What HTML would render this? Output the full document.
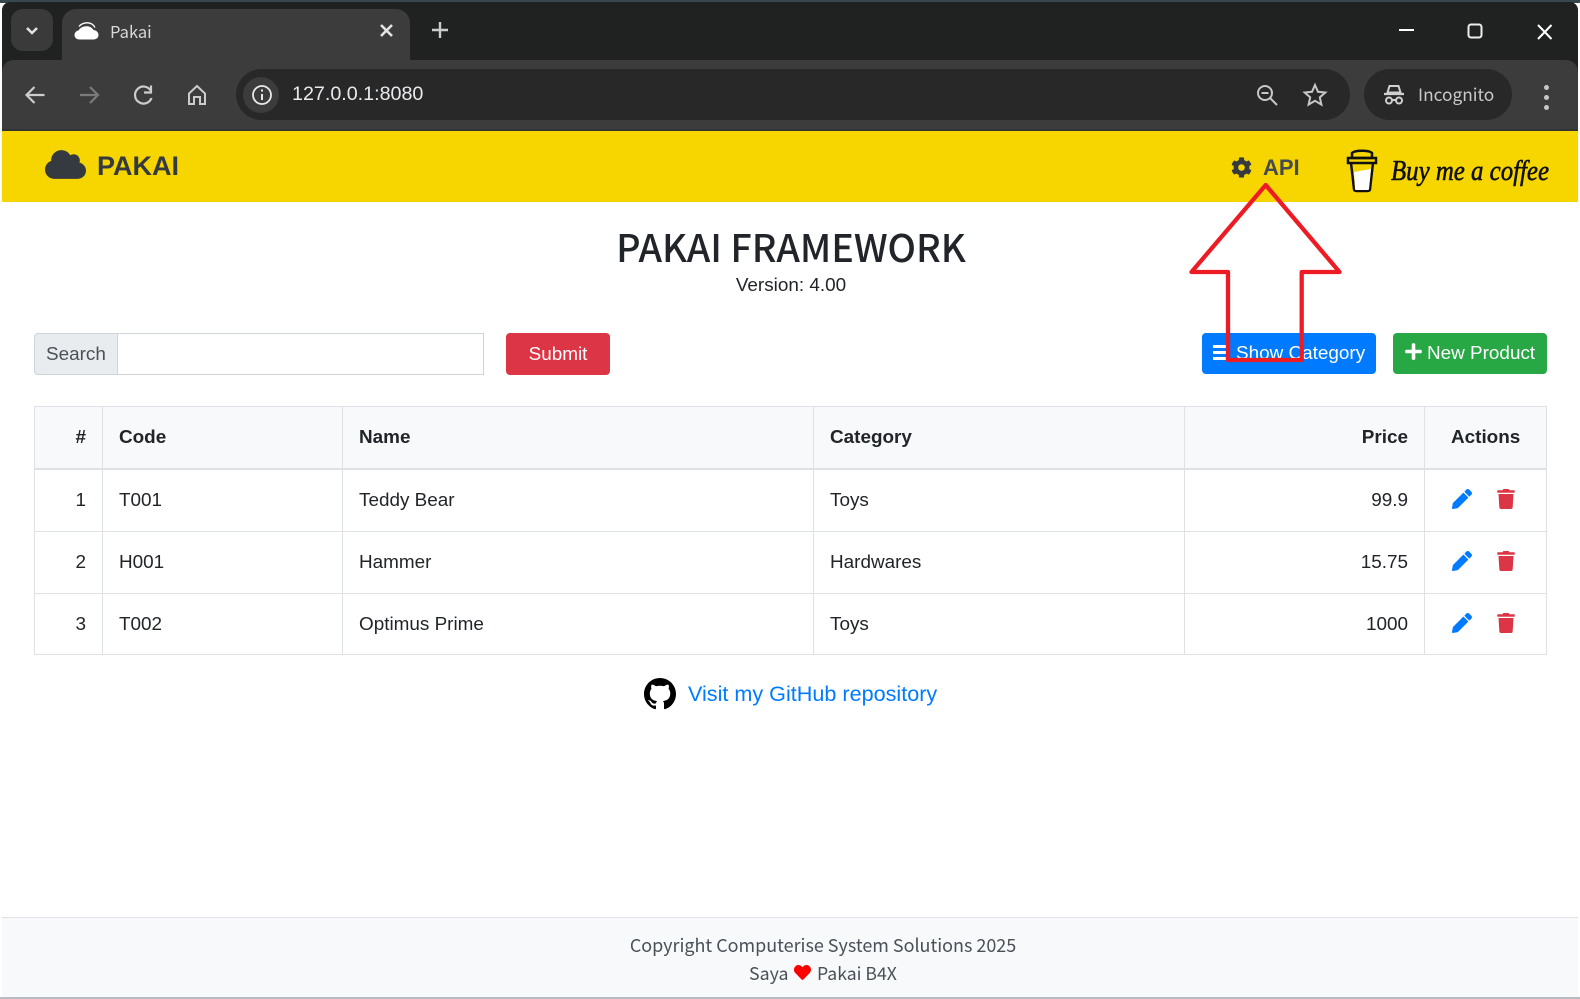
<!DOCTYPE html>
<html><head><meta charset="utf-8"><title>Pakai</title>
<style>
html,body{margin:0;padding:0;background:#fff}
body{position:relative;width:1580px;height:999px;overflow:hidden;font-family:"Liberation Sans",sans-serif;color:#212529}
.a{position:absolute}
.t{position:absolute;white-space:nowrap;line-height:1}
.n{font-family:"Noto Sans CJK SC","Liberation Sans",sans-serif}
.c{font-size:18.9px;color:#212529}
.b{font-weight:bold}
.r{text-align:right}
svg{position:absolute;overflow:visible}
.line{position:absolute;background:#dee2e6}
</style></head><body>
<!-- browser chrome -->
<div class="a" style="left:0;top:0;width:1580px;height:3px;background:#37474f"></div>
<div class="a" style="left:2px;top:2px;width:1576px;height:90px;background:#202221;border-radius:8px 8px 0 0"></div>
<div class="a" style="left:11px;top:9px;width:42px;height:42px;background:#3a3a3a;border-radius:12px"></div>
<svg style="left:0;top:0" width="1580" height="131" fill="none" stroke="#e3e3e3" stroke-width="2"><path d="M27 28l5 5 5-5" stroke-width="2.5"/></svg>
<div class="a" style="left:62px;top:9px;width:348px;height:60px;background:#3c3c3c;border-radius:14px 14px 0 0"></div>
<div class="a" style="left:2px;top:60px;width:1576px;height:69px;background:#3c3c3c;border-radius:12px 12px 0 0"></div>
<div class="a" style="left:2px;top:129px;width:1576px;height:2px;background:#333"></div>
<svg style="left:74px;top:22px" width="25" height="18" viewBox="0 0 25 18"><path fill="#fff" d="M5.500 17.500C2.500 17.500.5 15.500.5 13c0-2.400 1.800-4.200 4-4.500C6 5.800 9 4.200 12.500 4.200c3 0 5.600 1.300 7 3.800 2.800.3 5 2.300 5 5 0 2.600-2.200 4.500-5 4.500z"/><path fill="none" stroke="#fff" stroke-width="1.300" d="M5 4.500C7.500 1.500 10.500.7 13.500.8c3.500.1 6 1.700 7.500 4.700"/></svg>
<div class="t n" style="left:110px;top:23px;font-size:16.5px;color:#d8d8d8">Pakai</div>
<svg style="left:0;top:0" width="1580" height="131" fill="none" stroke="#e3e3e3" stroke-width="2">
<path d="M381 25l11 11M392 25l-11 11" stroke-width="2.6"/>
<path d="M440 22v16M432 30h16" stroke-width="2.4" stroke="#ccc"/>
<path d="M1399 30h15" stroke="#fff" stroke-width="2"/>
<rect x="1468.500" y="24.500" width="13" height="13" rx="2.500" stroke="#eee"/>
<path d="M1538 25l13.500 14M1551.500 25l-13.500 14" stroke="#fff" stroke-width="2"/>
<path d="M44.500 95H27.500M34.500 87l-8 8 8 8" stroke="#ccc" stroke-width="2.200"/>
<path d="M80 95h17M90 87l8 8-8 8" stroke="#7a7a7a" stroke-width="2.200"/>
<path d="M151 91a8.500 8.500 0 1 0 .5 7" stroke="#ccc" stroke-width="2.200"/><path d="M151 85.500v7h-7" stroke="#ccc" stroke-width="2.200"/>
<path d="M189 104V93.500l8-7.500 8 7.500V104h-5v-7h-6v7z" stroke="#ccc" stroke-width="2"/>
</svg>
<div class="a" style="left:236px;top:69px;width:1114px;height:51px;background:#282828;border-radius:26px"></div>
<div class="a" style="left:243px;top:77px;width:36px;height:36px;background:#3c3c3c;border-radius:50%"></div>
<svg style="left:0;top:0" width="1580" height="131" fill="none" stroke="#e8e8e8" stroke-width="1.800">
<circle cx="262" cy="95" r="9"/><path d="M262 94v6" stroke-width="2"/><path d="M262 89.500v2" stroke-width="2"/>
<circle cx="1265" cy="93" r="7" stroke="#c7c7c7" stroke-width="2"/><path d="M1261.500 93h7M1270 98l7 7" stroke="#c7c7c7" stroke-width="2"/>
<path d="M1315 85l3 6.800 7.300.7-5.500 4.900 1.600 7.200-6.400-3.800-6.400 3.800 1.600-7.200-5.500-4.900 7.300-.7z" stroke="#c7c7c7" stroke-width="2"/>
</svg>
<div class="t" style="left:292px;top:85px;font-size:19.7px;color:#e8eaed">127.0.0.1:8080</div>
<div class="a" style="left:1364px;top:69px;width:148px;height:51px;background:#282828;border-radius:26px"></div>
<svg style="left:1383px;top:84px" width="22" height="22" fill="none" stroke="#d0d0d0" stroke-width="2"><path d="M4.500 8.500L6.500 2h9l2 6.500z" fill="#282828"/><path d="M1 10h20" stroke-width="2.200"/><circle cx="6" cy="16.500" r="3"/><circle cx="16" cy="16.500" r="3"/><path d="M9 16h4"/></svg>
<div class="t n" style="left:1418px;top:85px;font-size:17.3px;color:#c9c9c9">Incognito</div>
<div class="a" style="left:1544px;top:84.500px;width:5px;height:5px;border-radius:50%;background:#c7c7c7;box-shadow:0 10px 0 #c7c7c7,0 20px 0 #c7c7c7"></div>

<!-- navbar -->
<div class="a" style="left:2px;top:131px;width:1576px;height:71px;background:#f7d600"></div>
<svg style="left:45px;top:148px" width="41" height="33" viewBox="0 0 640 512"><path fill="#343a40" d="M537.6 226.6c4.1-10.7 6.4-22.4 6.4-34.6 0-53-43-96-96-96-19.7 0-38.1 6-53.3 16.2C367 64.200 315.3 32 256 32c-88.400 0-160 71.600-160 160 0 2.700.1 5.400.2 8.100C40.200 219.800 0 273.200 0 336c0 79.500 64.500 144 144 144h368c70.700 0 128-57.300 128-128 0-61.900-44-113.600-102.400-125.400z"/></svg>
<div class="t b" style="left:97px;top:153px;font-size:27px;color:#343a40">PAKAI</div>
<svg style="left:1231px;top:157px" width="21" height="21" viewBox="0 0 512 512"><path fill="#343a40" d="M487.4 315.7l-42.6-24.6c4.3-23.2 4.3-47 0-70.2l42.6-24.6c4.9-2.8 7.1-8.6 5.5-14-11.1-35.6-30-67.8-54.7-94.6-3.8-4.1-10-5.1-14.8-2.3L380.8 110c-17.9-15.4-38.5-27.3-60.8-35.1V25.8c0-5.6-3.9-10.5-9.4-11.7-36.7-8.2-74.3-7.8-109.2 0-5.5 1.2-9.4 6.1-9.4 11.7V75c-22.2 7.9-42.8 19.8-60.8 35.1L88.7 85.5c-4.9-2.8-11-1.9-14.8 2.3-24.7 26.7-43.6 58.9-54.7 94.6-1.7 5.4.6 11.2 5.5 14L67.3 221c-4.3 23.2-4.3 47 0 70.2l-42.6 24.6c-4.9 2.8-7.1 8.6-5.5 14 11.1 35.6 30 67.8 54.7 94.6 3.8 4.1 10 5.1 14.8 2.3l42.6-24.6c17.9 15.4 38.5 27.3 60.8 35.1v49.2c0 5.6 3.9 10.5 9.4 11.7 36.7 8.2 74.3 7.8 109.2 0 5.5-1.2 9.4-6.1 9.4-11.7v-49.2c22.2-7.9 42.8-19.8 60.8-35.1l42.6 24.6c4.9 2.8 11 1.9 14.8-2.3 24.7-26.7 43.6-58.9 54.7-94.6 1.5-5.5-.7-11.3-5.6-14.1zM256 336c-44.1 0-80-35.9-80-80s35.9-80 80-80 80 35.9 80 80-35.9 80-80 80z"/></svg>
<div class="t b" style="left:1263px;top:157px;font-size:22px;color:#454b52">API</div>
<svg style="left:1346px;top:147px" width="32" height="46" fill="none" stroke="#111" stroke-width="2.500"><path d="M6 6c3-3 17-3 20 0v5H6z"/><path d="M2 11h28v5H2z"/><path d="M5 16l3 26c0 2 2 2 3 2h10c1 0 3 0 3-2l3-26"/><path d="M8 25l17-3-2 20c0 1-1 1-2 1H11c-1 0-2 0-2-1z" fill="#fff" stroke="none"/></svg>
<svg style="left:1391px;top:155px" width="160" height="40"><text x="0" y="25" textLength="158" lengthAdjust="spacingAndGlyphs" font-family="Liberation Serif" font-style="italic" font-size="29" fill="#111" stroke="#111" stroke-width=".6">Buy me a coffee</text></svg>

<!-- heading -->
<div class="t n" style="left:0;width:1582px;text-align:center;top:227px;font-size:37.8px;font-weight:500;color:#212529">PAKAI FRAMEWORK</div>
<div class="t" style="left:0;width:1582px;text-align:center;top:277px;font-size:18.9px;color:#212529">Version: 4.00</div>

<!-- search -->
<div class="a" style="left:34px;top:333px;width:84px;height:42px;box-sizing:border-box;background:#e9ecef;border:1px solid #ced4da;border-radius:4px 0 0 4px"></div>
<div class="a" style="left:117px;top:333px;width:367px;height:42px;box-sizing:border-box;background:#fff;border:1px solid #ced4da"></div>
<div class="t" style="left:46px;top:346px;font-size:18.9px;color:#495057">Search</div>
<div class="a" style="left:506px;top:333px;width:104px;height:42px;background:#dc3545;border-radius:4px"></div>
<div class="t" style="left:506px;width:104px;text-align:center;top:346px;font-size:18.9px;color:#fff">Submit</div>
<div class="a" style="left:1202px;top:333px;width:174px;height:41px;background:#007bff;border-radius:4px"></div>
<svg style="left:1213px;top:344px" width="15" height="17" fill="#fff"><rect x="0" y="1" width="14" height="3"/><rect x="0" y="7" width="14" height="3"/><rect x="0" y="13" width="14" height="3"/></svg>
<div class="t" style="left:1236px;top:345px;font-size:18.9px;color:#fff">Show Category</div>
<div class="a" style="left:1393px;top:333px;width:154px;height:41px;background:#28a745;border-radius:4px"></div>
<svg style="left:1405px;top:342px" width="17" height="19" viewBox="0 0 448 512"><path fill="#fff" d="M416 208H272V64c0-17.67-14.33-32-32-32h-32c-17.67 0-32 14.33-32 32v144H32c-17.67 0-32 14.33-32 32v32c0 17.67 14.33 32 32 32h144v144c0 17.67 14.33 32 32 32h32c17.67 0 32-14.33 32-32V304h144c17.67 0 32-14.33 32-32v-32c0-17.67-14.33-32-32-32z"/></svg>
<div class="t" style="left:1427px;top:345px;font-size:18.9px;color:#fff">New Product</div>

<!-- table -->
<div class="a" style="left:34px;top:406px;width:1513px;height:63px;background:#f8f9fa"></div>
<div class="line" style="left:34px;top:406px;width:1513px;height:1px"></div>
<div class="line" style="left:34px;top:468px;width:1513px;height:2px"></div>
<div class="line" style="left:34px;top:531px;width:1513px;height:1px"></div>
<div class="line" style="left:34px;top:593px;width:1513px;height:1px"></div>
<div class="line" style="left:34px;top:654px;width:1513px;height:1px"></div>
<div class="line" style="left:34px;top:406px;width:1px;height:249px"></div>
<div class="line" style="left:102px;top:406px;width:1px;height:249px"></div>
<div class="line" style="left:342px;top:406px;width:1px;height:249px"></div>
<div class="line" style="left:813px;top:406px;width:1px;height:249px"></div>
<div class="line" style="left:1184px;top:406px;width:1px;height:249px"></div>
<div class="line" style="left:1424px;top:406px;width:1px;height:249px"></div>
<div class="line" style="left:1546px;top:406px;width:1px;height:249px"></div>

<div class="t c b r" style="left:34px;width:52px;top:429px">#</div>
<div class="t c b" style="left:119px;top:429px">Code</div>
<div class="t c b" style="left:359px;top:429px">Name</div>
<div class="t c b" style="left:830px;top:429px">Category</div>
<div class="t c b r" style="left:1184px;width:224px;top:429px">Price</div>
<div class="t c b" style="left:1451px;top:429px">Actions</div>

<div class="t c r" style="left:34px;width:52px;top:492px">1</div>
<div class="t c" style="left:119px;top:492px">T001</div>
<div class="t c" style="left:359px;top:492px">Teddy Bear</div>
<div class="t c" style="left:830px;top:492px">Toys</div>
<div class="t c r" style="left:1184px;width:224px;top:492px">99.9</div>

<div class="t c r" style="left:34px;width:52px;top:554px">2</div>
<div class="t c" style="left:119px;top:554px">H001</div>
<div class="t c" style="left:359px;top:554px">Hammer</div>
<div class="t c" style="left:830px;top:554px">Hardwares</div>
<div class="t c r" style="left:1184px;width:224px;top:554px">15.75</div>

<div class="t c r" style="left:34px;width:52px;top:616px">3</div>
<div class="t c" style="left:119px;top:616px">T002</div>
<div class="t c" style="left:359px;top:616px">Optimus Prime</div>
<div class="t c" style="left:830px;top:616px">Toys</div>
<div class="t c r" style="left:1184px;width:224px;top:616px">1000</div>

<svg width="0" height="0"><defs>
<path id="pen" fill="#007bff" d="M497.900 142.100l-46.100 46.100c-4.700 4.700-12.300 4.700-17 0l-111-111c-4.700-4.700-4.700-12.300 0-17l46.100-46.100c18.700-18.700 49.100-18.700 67.900 0l60.100 60.100c18.800 18.700 18.800 49.100 0 67.900zM284.200 99.800L21.600 362.400.4 483.900c-2.900 16.400 11.400 30.600 27.800 27.800l121.500-21.300 262.600-262.600c4.700-4.700 4.700-12.300 0-17l-111-111c-4.800-4.700-12.400-4.700-17.100 0z"/>
<path id="bin" fill="#dc3545" d="M432 32H312l-9.400-18.700A24 24 0 0 0 281.100 0H166.800a23.720 23.720 0 0 0-21.400 13.300L136 32H16A16 16 0 0 0 0 48v32a16 16 0 0 0 16 16h416a16 16 0 0 0 16-16V48a16 16 0 0 0-16-16zM53.200 467a48 48 0 0 0 47.900 45h245.800a48 48 0 0 0 47.900-45L416 128H32z"/>
</defs></svg>
<svg style="left:1452px;top:489px" width="20" height="20" viewBox="0 0 512 512"><use href="#pen"/></svg>
<svg style="left:1497px;top:489px" width="18" height="20" viewBox="0 0 448 512"><use href="#bin"/></svg>
<svg style="left:1452px;top:551px" width="20" height="20" viewBox="0 0 512 512"><use href="#pen"/></svg>
<svg style="left:1497px;top:551px" width="18" height="20" viewBox="0 0 448 512"><use href="#bin"/></svg>
<svg style="left:1452px;top:613px" width="20" height="20" viewBox="0 0 512 512"><use href="#pen"/></svg>
<svg style="left:1497px;top:613px" width="18" height="20" viewBox="0 0 448 512"><use href="#bin"/></svg>

<!-- github -->
<svg style="left:644px;top:678px" width="32" height="32" viewBox="0 0 16 16"><path fill="#000" d="M8 0C3.580 0 0 3.580 0 8c0 3.540 2.290 6.530 5.470 7.590.4.070.55-.17.55-.38 0-.19-.01-.82-.01-1.490-2.010.37-2.530-.49-2.690-.94-.09-.23-.48-.94-.82-1.130-.28-.15-.68-.52-.01-.53.63-.01 1.080.58 1.230.82.72 1.210 1.870.87 2.330.66.070-.52.28-.87.51-1.070-1.780-.2-3.640-.89-3.640-3.950 0-.87.31-1.590.82-2.150-.08-.2-.36-1.020.08-2.120 0 0 .67-.21 2.200.82.64-.18 1.320-.27 2-.27.68 0 1.360.09 2 .27 1.530-1.040 2.200-.82 2.200-.82.44 1.100.16 1.920.08 2.120.51.56.82 1.270.82 2.150 0 3.070-1.870 3.750-3.650 3.950.29.25.54.73.54 1.480 0 1.070-.01 1.930-.01 2.200 0 .21.15.46.55.38A8.013 8.013 0 0016 8c0-4.420-3.580-8-8-8z"/></svg>
<div class="t" style="left:688px;top:683px;font-size:21.6px;color:#007bff">Visit my GitHub repository</div>

<!-- arrow -->
<svg style="left:0;top:0" width="1580" height="400"><path d="M1265.700 185L1339.500 272h-37.800v88H1228v-88h-36.500z" fill="none" stroke="#ed1c24" stroke-width="4.300" stroke-linejoin="round"/></svg>

<!-- footer -->
<div class="a" style="left:2px;top:917px;width:1576px;height:80px;background:#f8f9fa;border-top:1px solid #dee2e6;box-sizing:border-box"></div>
<div class="a" style="left:0;top:997px;width:1580px;height:2px;background:#b8bcc0"></div>
<div class="t n" style="left:0;width:1646px;text-align:center;top:937px;font-size:17.95px;color:#495057">Copyright Computerise System Solutions 2025</div>
<div class="t n" style="left:749px;top:965px;font-size:17.8px;color:#495057">Saya</div>
<svg style="left:794px;top:964px" width="17" height="17" viewBox="0 0 512 512"><path fill="#f00" d="M462.300 62.600C407.500 15.900 326 24.300 275.700 76.200L256 96.500l-19.700-20.300C186.100 24.300 104.500 15.900 49.700 62.600c-62.800 53.600-66.100 149.800-9.900 207.900l193.500 199.800c12.500 12.900 32.800 12.900 45.300 0l193.500-199.800c56.300-58.100 53-154.300-9.800-207.900z"/></svg>
<div class="t n" style="left:817px;top:965px;font-size:17.6px;color:#495057">Pakai B4X</div>
</body></html>
